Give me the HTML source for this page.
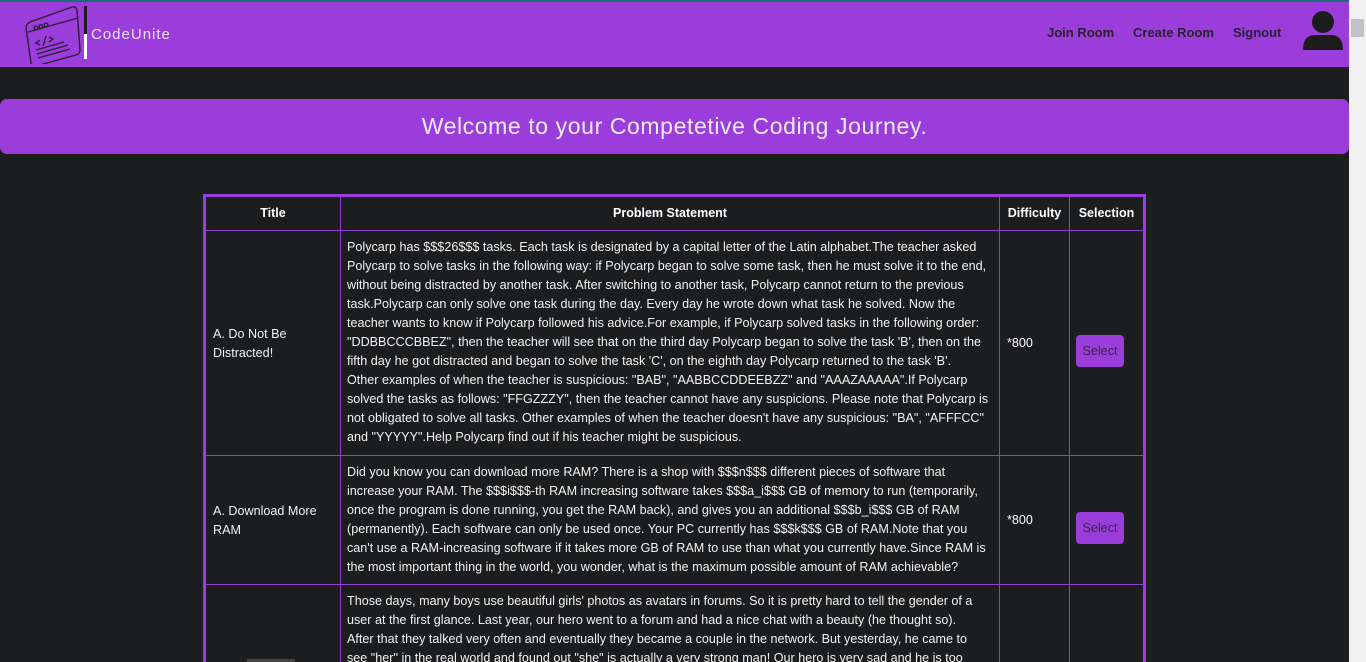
<!DOCTYPE html>
<html style="height:662px;overflow:hidden"><head><meta charset="utf-8"><style>
*{margin:0;padding:0;box-sizing:border-box}
body{width:1366px;height:662px;overflow:hidden;background:#1c1d1f;font-family:"Liberation Sans",sans-serif;color:#fff;position:relative}
.abs{position:absolute}
.nav{left:0;top:0;width:1349px;height:67px;background:#9a3ddb;border-top:2px solid #1b6b78}
.sb{left:1349px;top:0;width:17px;height:662px;background:#f0f0f0}
.sb .th{position:absolute;left:2px;top:19px;width:13px;height:18px;background:#c2c2c2}
.nl{top:23px;font-size:13px;font-weight:bold;color:#2a1f33}
.banner{left:0;top:99px;width:1349px;height:55px;background:#9a3ddb;border-radius:7px;text-align:center;font-size:23px;letter-spacing:0.6px;line-height:55px;color:#f4eafc}
.tbl{left:203px;top:194px;width:943px;height:500px;border:3px solid #9a3ddb}
.v{position:absolute;top:197px;width:1px;height:470px;background:#8f3fd6}
.h{position:absolute;left:206px;width:937px;height:1px;background:#8f3fd6}
.th2{position:absolute;top:206px;font-size:12.5px;font-weight:bold;text-align:center}
.txt{position:absolute;left:347px;font-size:12.6px;line-height:19px;white-space:nowrap;color:#f2f2f2}
.t{position:absolute;left:213px;font-size:12.6px;line-height:19px;color:#f2f2f2}
.d{position:absolute;left:1007px;font-size:12.6px}
.btn{position:absolute;left:1076px;width:48px;height:32px;background:#9a3ddb;border-radius:4px;color:#3a2450;font-size:12.6px;line-height:32px;text-align:center}
</style></head><body>
<div class="abs nav">
<svg class="abs" style="left:24px;top:2px" width="62" height="60" viewBox="0 0 62 60" fill="none" stroke="#2a1f33" stroke-width="1.4">
<path d="M6 18 L48 3 Q52 2 53 6 L56 46 Q56 50 52 51 L12 62 Q8 63 7 59 L2 24 Q2 20 6 18Z"/>
<path d="M4 28 L54 14"/><circle cx="12" cy="24" r="1.8"/><circle cx="17" cy="22.5" r="1.8"/><circle cx="22" cy="21" r="1.8"/>
<path d="M16 36 l-4 3 4 2 M22 32 l-3 10 M25 33 l4 2 -4 3 M12 46 L40 38 M13 50 L44 41 M14 54 L46 45"/>
</svg>
<div class="abs" style="left:84px;top:4px;width:3px;height:28px;background:#1c1c1c"></div>
<div class="abs" style="left:84px;top:32px;width:3px;height:25px;background:#fff"></div>
<div class="abs" style="left:91px;top:24px;font-size:15px;color:#f0e0ff;letter-spacing:1px">CodeUnite</div>
<div class="abs nl" style="left:1047px">Join Room</div>
<div class="abs nl" style="left:1133px">Create Room</div>
<div class="abs nl" style="left:1233px">Signout</div>
<svg class="abs" style="left:1302px;top:8px" width="42" height="40" viewBox="0 0 42 40"><circle cx="21" cy="12" r="11" fill="#1c1c1c"/><path d="M1 40 Q1 25 13 25 L29 25 Q41 25 41 40Z" fill="#1c1c1c"/></svg>
</div>
<div class="abs sb"><div class="th"></div></div>
<div class="abs banner">Welcome to your Competetive Coding Journey.</div>
<div class="abs tbl"></div>
<div class="v" style="left:340px"></div><div class="v" style="left:999px"></div><div class="v" style="left:1069px"></div>
<div class="h" style="top:230px"></div><div class="h" style="top:455px"></div><div class="h" style="top:584px"></div>
<div class="th2" style="left:206px;width:134px">Title</div>
<div class="th2" style="left:341px;width:658px">Problem Statement</div>
<div class="th2" style="left:1000px;width:69px">Difficulty</div>
<div class="th2" style="left:1070px;width:73px">Selection</div>
<div class="t" style="top:325px">A. Do Not Be<br>Distracted!</div>
<div class="txt" style="top:238px">Polycarp has $$$26$$$ tasks. Each task is designated by a capital letter of the Latin alphabet.The teacher asked<br>Polycarp to solve tasks in the following way: if Polycarp began to solve some task, then he must solve it to the end,<br>without being distracted by another task. After switching to another task, Polycarp cannot return to the previous<br>task.Polycarp can only solve one task during the day. Every day he wrote down what task he solved. Now the<br>teacher wants to know if Polycarp followed his advice.For example, if Polycarp solved tasks in the following order:<br>"DDBBCCCBBEZ", then the teacher will see that on the third day Polycarp began to solve the task 'B', then on the<br>fifth day he got distracted and began to solve the task 'C', on the eighth day Polycarp returned to the task 'B'.<br>Other examples of when the teacher is suspicious: "BAB", "AABBCCDDEEBZZ" and "AAAZAAAAA".If Polycarp<br>solved the tasks as follows: "FFGZZZY", then the teacher cannot have any suspicions. Please note that Polycarp is<br>not obligated to solve all tasks. Other examples of when the teacher doesn't have any suspicious: "BA", "AFFFCC"<br>and "YYYYY".Help Polycarp find out if his teacher might be suspicious.</div>
<div class="d" style="top:336px">*800</div>
<div class="btn" style="top:335px">Select</div>
<div class="t" style="top:502px">A. Download More<br>RAM</div>
<div class="txt" style="top:463px">Did you know you can download more RAM? There is a shop with $$$n$$$ different pieces of software that<br>increase your RAM. The $$$i$$$-th RAM increasing software takes $$$a_i$$$ GB of memory to run (temporarily,<br>once the program is done running, you get the RAM back), and gives you an additional $$$b_i$$$ GB of RAM<br>(permanently). Each software can only be used once. Your PC currently has $$$k$$$ GB of RAM.Note that you<br>can't use a RAM-increasing software if it takes more GB of RAM to use than what you currently have.Since RAM is<br>the most important thing in the world, you wonder, what is the maximum possible amount of RAM achievable?</div>
<div class="d" style="top:513px">*800</div>
<div class="btn" style="top:512px">Select</div>
<div class="txt" style="top:592px">Those days, many boys use beautiful girls' photos as avatars in forums. So it is pretty hard to tell the gender of a<br>user at the first glance. Last year, our hero went to a forum and had a nice chat with a beauty (he thought so).<br>After that they talked very often and eventually they became a couple in the network. But yesterday, he came to<br>see "her" in the real world and found out "she" is actually a very strong man! Our hero is very sad and he is too</div>
<div class="abs" style="left:247px;top:659px;width:48px;height:3px;background:#444"></div>
</body></html>
